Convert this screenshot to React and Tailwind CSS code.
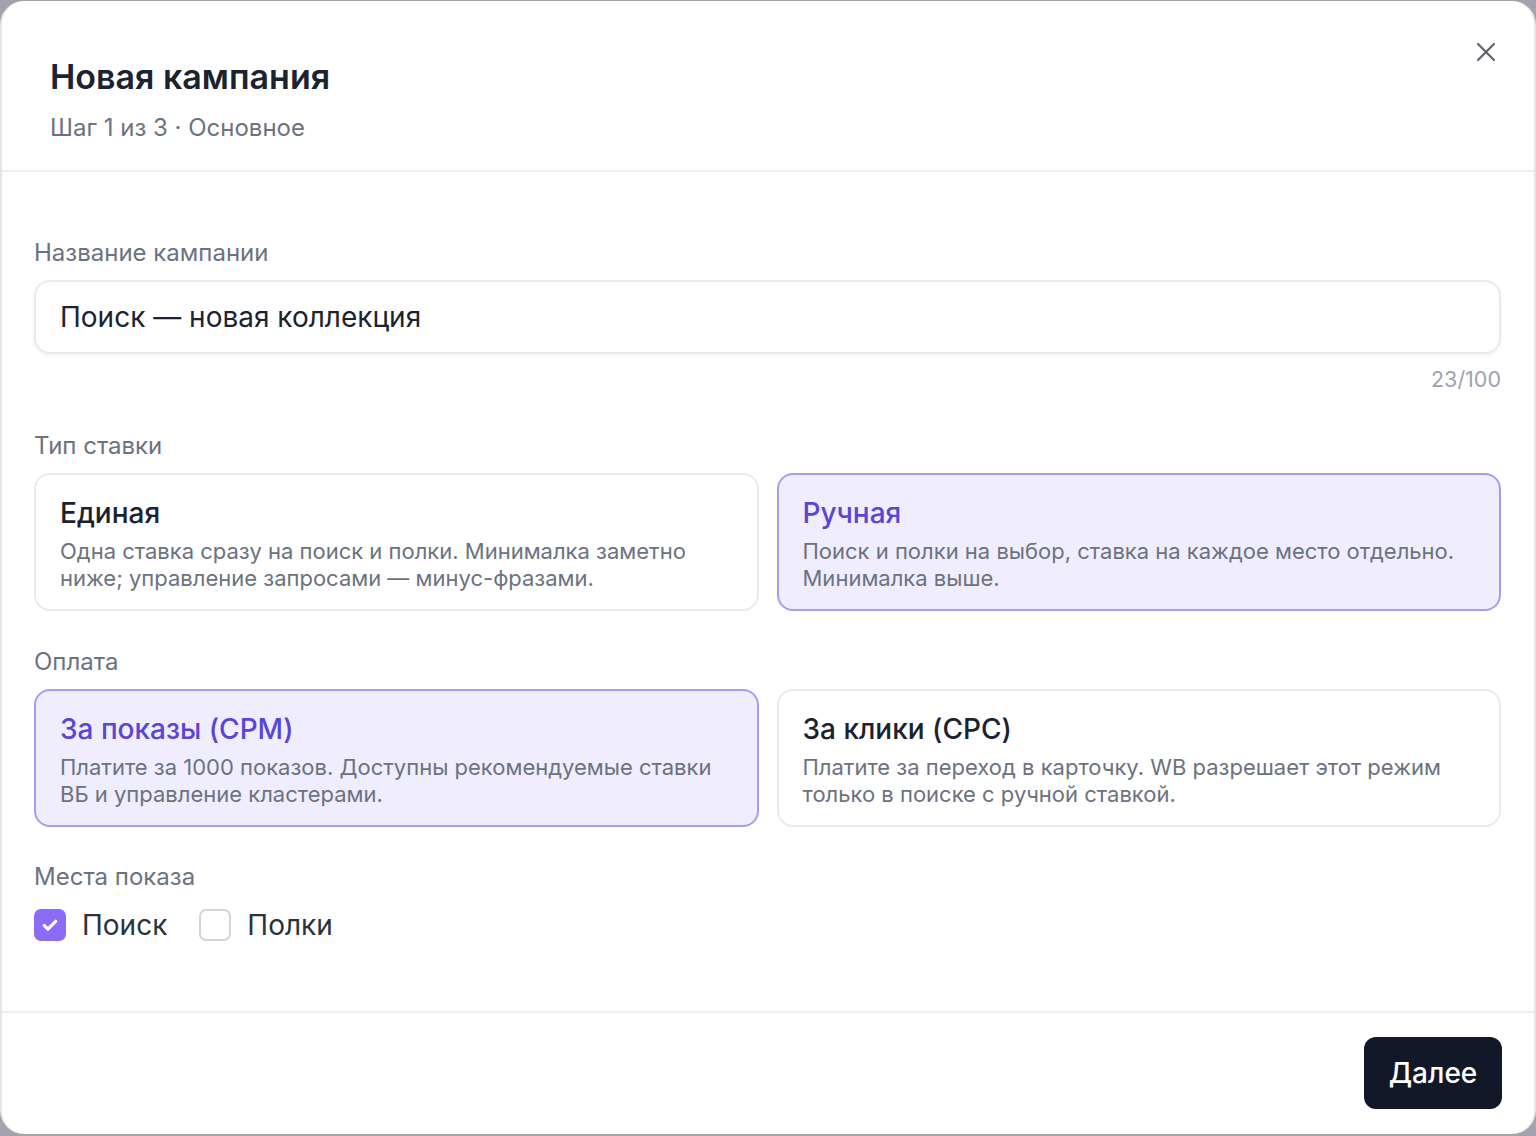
import React, { useState } from "react";

const font = { fontFamily: "Inter, 'Noto Sans', sans-serif" };

function OptionCard({ title, text, active, onClick }) {
  return (
    <button
      type="button"
      onClick={onClick}
      className={
        active
          ? "flex-1 text-left rounded-[16px] border-[2px] border-[#a99cf0] bg-[#f0edfe] px-[24px] pt-[20px] pb-[17px]"
          : "flex-1 text-left rounded-[16px] border-[2px] border-[#e9eaee] bg-white px-[24px] pt-[20px] pb-[17px]"
      }
    >
      <div
        className={
          active
            ? "text-[28px] leading-[36px] font-medium text-[#5b44d8]"
            : "text-[28px] leading-[36px] font-medium text-[#1b2230]"
        }
      >
        {title}
      </div>
      <div className="mt-[7px] text-[22px] leading-[27px] text-[#6b7280]">{text}</div>
    </button>
  );
}

function CheckBox({ checked, label, onClick }) {
  return (
    <button type="button" onClick={onClick} className="flex items-center gap-[16px]">
      {checked ? (
        <span className="flex h-[32px] w-[32px] items-center justify-center rounded-[7px] bg-[#8b6cf5]">
          <svg width="20" height="20" viewBox="0 0 24 24" fill="none" stroke="white" strokeWidth="3.8" strokeLinecap="round" strokeLinejoin="round">
            <path d="M5 12.5l4.5 4.5L19 7.5" />
          </svg>
        </span>
      ) : (
        <span className="h-[32px] w-[32px] rounded-[7px] border-[2px] border-[#d1d5db] bg-white" />
      )}
      <span className="text-[28px] leading-[36px] text-[#2b3240]">{label}</span>
    </button>
  );
}

export default function App() {
  const [bid, setBid] = useState("manual");
  const [pay, setPay] = useState("cpm");
  const [search, setSearch] = useState(true);
  const [shelves, setShelves] = useState(false);
  const name = "Поиск — новая коллекция";

  return (
    <div className="h-[1136px] w-full bg-[#a3a3ab] pt-[1px] pb-[2px] overflow-hidden" style={font}>
      <div className="relative flex h-full flex-col rounded-[24px] border-l-[2px] border-r-[2px] border-[#e6e7ec] bg-white">
        {/* header */}
        <div className="border-b-[2px] border-[#eceef1] px-[48px] pt-[56px] pb-[27px]">
          <h2 className="text-[34px] leading-[40px] font-semibold text-[#1b2230]">Новая кампания</h2>
          <p className="mt-[16px] text-[24px] leading-[30px] text-[#6b7280]">Шаг 1 из 3 · Основное</p>
        </div>
        <button type="button" className="absolute right-[36px] top-[39px] text-[#5f6470]" aria-label="close">
          <svg width="24" height="24" viewBox="0 0 24 24" fill="none" stroke="currentColor" strokeWidth="2.2" strokeLinecap="round">
            <path d="M4 4l16 16M20 4L4 20" />
          </svg>
        </button>

        {/* body */}
        <div className="flex-1 pl-[32px] pr-[33px] pt-[66px]">
          <label className="block text-[24px] leading-[30px] text-[#6b7280]">Название кампании</label>
          <div className="mt-[12px] flex h-[74px] items-center rounded-[16px] border-[2px] border-[#e9eaee] bg-white px-[24px] shadow-[0_2px_4px_rgba(0,0,0,0.05)]">
            <span className="text-[28px] leading-[36px] text-[#1b2230]">{name}</span>
          </div>
          <div className="mt-[11px] text-right text-[21.5px] leading-[28px] text-[#9ca3af]">{name.length}/100</div>

          <div className="mt-[38px] text-[24px] leading-[30px] text-[#6b7280]">Тип ставки</div>
          <div className="mt-[12px] flex gap-[18px]">
            <OptionCard
              title="Единая"
              text="Одна ставка сразу на поиск и полки. Минималка заметно ниже; управление запросами — минус-фразами."
              active={bid === "single"}
              onClick={() => setBid("single")}
            />
            <OptionCard
              title="Ручная"
              text="Поиск и полки на выбор, ставка на каждое место отдельно. Минималка выше."
              active={bid === "manual"}
              onClick={() => setBid("manual")}
            />
          </div>

          <div className="mt-[36px] text-[24px] leading-[30px] text-[#6b7280]">Оплата</div>
          <div className="mt-[12px] flex gap-[18px]">
            <OptionCard
              title="За показы (CPM)"
              text="Платите за 1000 показов. Доступны рекомендуемые ставки ВБ и управление кластерами."
              active={pay === "cpm"}
              onClick={() => setPay("cpm")}
            />
            <OptionCard
              title="За клики (CPC)"
              text="Платите за переход в карточку. WB разрешает этот режим только в поиске с ручной ставкой."
              active={pay === "cpc"}
              onClick={() => setPay("cpc")}
            />
          </div>

          <div className="mt-[35px] text-[24px] leading-[30px] text-[#6b7280]">Места показа</div>
          <div className="mt-[15px] flex items-center gap-[32px]">
            <CheckBox checked={search} label="Поиск" onClick={() => setSearch(!search)} />
            <CheckBox checked={shelves} label="Полки" onClick={() => setShelves(!shelves)} />
          </div>
        </div>

        {/* footer */}
        <div className="flex justify-end border-t-[2px] border-[#eceef1] pr-[32px] pt-[24px] pb-[25px]">
          <button type="button" className="h-[72px] w-[138px] rounded-[12px] bg-[#111827] text-[28px] font-medium text-white">
            Далее
          </button>
        </div>
      </div>
    </div>
  );
}
